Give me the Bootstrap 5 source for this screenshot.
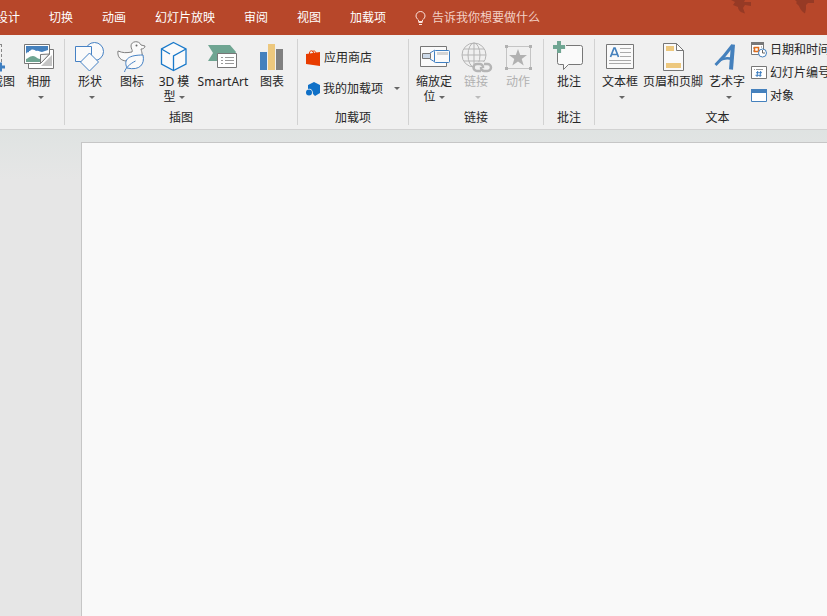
<!DOCTYPE html>
<html lang="zh-CN">
<head>
<meta charset="utf-8">
<meta name="viewport" content="width=device-width, initial-scale=1">
<title>演示文稿</title>
<link rel="stylesheet" href="https://cdn.jsdelivr.net/npm/bootstrap@5.3.0/dist/css/bootstrap.min.css">
<style>
body{font-family:"Noto Sans","Noto Sans CJK SC",sans-serif;font-size:12px;line-height:15px;color:#262626;background:#e6e6e6}
.title-tabs{background:#b7472a;height:35px;line-height:18px}
.tab-list{gap:29px;margin-left:-4px}
.tab-list a{color:#fff}
.tell-me{margin-left:29px;gap:6px;color:#fbe3dc}
.tell-me input{width:160px;height:18px;font-size:12px;line-height:18px;color:inherit;outline:0}
.tell-me input::placeholder{color:#f3d0c5;opacity:1}
.leaves{right:8px;top:0}
.ribbon{background:#f0f0f0;border-bottom:1px solid #d2d2d2;padding:4px 0}
.tool-group{height:86px;border-right:1px solid #d2d2d2;padding:0 4px}
.tool-group h2{font-size:12px;line-height:15px;margin:0;font-weight:400}
.g-images{width:65px}.g-art{width:233px}.g-addins{width:111px}.g-links{width:135px}.g-notes{width:51px}.g-text{width:246px}
.tool{border:0;background:none;padding:1px 0 0;width:42px;color:inherit;display:flex;flex-direction:column;align-items:center}
.tool svg{flex:none;margin-bottom:2px;overflow:visible}
.tool.w-clip{width:30px}.tool.w-smart{width:56px}.tool.w-page{width:64px}.tool.w-word{width:44px}
.tool:disabled{color:#b1b1b1}
.arrow{display:inline-block;border:3px solid transparent;border-top-color:#666;border-bottom:0;vertical-align:2px}
.tool .below{margin:7px 0 0 3px}
.tool:disabled .arrow{border-top-color:#bbb}
.row-tool{border:0;background:none;padding:0;color:inherit;gap:3px;height:23px}
.row-tool.tall{height:31px}
.g-addins .tools{padding:3px 4px 0}
.g-text .side{margin-top:-1px;padding-left:2px}
.workspace{background:linear-gradient(#dfe3e2,#e6e6e6 50px);padding:12px 0 0 81px}
.slide{background:#f9f9f9;border:1px solid #c6c6c6;border-width:1px 0 0 1px}
</style>
<script src="https://cdn.jsdelivr.net/npm/bootstrap@5.3.0/dist/js/bootstrap.bundle.min.js"></script>
</head>
<body class="d-flex flex-column min-vh-100 overflow-hidden">
<header class="title-tabs position-relative d-flex align-items-center overflow-hidden text-nowrap">
  <nav class="tab-list d-flex flex-shrink-0">
    <a class="text-decoration-none" href="#">设计</a>
    <a class="text-decoration-none" href="#">切换</a>
    <a class="text-decoration-none" href="#">动画</a>
    <a class="text-decoration-none" href="#">幻灯片放映</a>
    <a class="text-decoration-none" href="#">审阅</a>
    <a class="text-decoration-none" href="#">视图</a>
    <a class="text-decoration-none" href="#">加载项</a>
  </nav>
  <label class="tell-me d-flex align-items-center">
    <svg width="11" height="14" viewBox="0 0 11 14" fill="none" stroke="currentColor" aria-hidden="true"><path d="M3.500 10.500V9C2 7.800 1 6.500 1 5a4.500 4.500 0 0 1 9 0c0 1.500-1 2.800-2.500 4v1.500zM3.500 11.500h4M4 13.500h3"/></svg>
    <input class="border-0 bg-transparent p-0" type="text" placeholder="告诉我你想要做什么" aria-label="操作说明搜索">
  </label>
  <svg class="leaves position-absolute" width="88" height="14" viewBox="0 0 88 14" fill="#963a25" aria-hidden="true"><path d="M0 0h14l-1 2h7v4l-6-1-2 3 2 5.500c-4-1-7-3-7-6.500L2 5l2-3zM64 0h19v3h-6l-2 2v4l-1 4.500c-3-2-5-4-6-7.500l-3-3 1-1z"/></svg>
</header>

<main class="ribbon d-flex flex-nowrap overflow-hidden text-nowrap">
  <section class="tool-group g-images d-flex flex-column flex-shrink-0 overflow-hidden">
    <div class="d-flex justify-content-end align-items-start">
      <button class="tool w-clip flex-shrink-0" type="button">
        <svg width="30" height="32" fill="none"><path d="M0 4.500h13M13.500 4v18" stroke="#888" stroke-dasharray="3 2"/><path d="M8 27h9M12.500 22.500v9" stroke="#3f7fc1" stroke-width="3"/></svg>截图
      </button>
      <button class="tool flex-shrink-0" type="button">
        <svg width="30" height="32" fill="none"><path d="M4.500 23v5.500h25v-19h-4" fill="#fff" stroke="#777"/><path d="M17 26l11-11v11z" fill="#c4c4c4"/><path d="M.5 4.500h25V14l-9 9.500H.5z" fill="#fff" stroke="#777"/><path d="M2 6h22v8h-7v8H2z" fill="#4581bd"/><path d="M2 14c1-3 4-1 4-3 2-3 5-1 6 0 3-1 4 1 6 1l6-2v4h-7v8H2z" fill="#fff"/><path d="M2 19c2 0 3-3 7-3 3 0 4 3 7 3v3H2z" fill="#6fa592"/><path d="M25.500 14l-9 9.500V14.500z" fill="#f4f4f4" stroke="#777"/></svg>相册<span class="arrow below"></span>
      </button>
    </div>
  </section>

  <section class="tool-group g-art d-flex flex-column flex-shrink-0">
    <div class="d-flex flex-fill">
      <button class="tool" type="button">
        <svg width="30" height="32" fill="#fafafa" stroke="#4581c4"><circle cx="19.500" cy="11.500" r="9"/><path d="M.5 6.500h16v15H.5z"/><path d="M14.500 13l9 9-9 9-9-9z"/></svg>形状<span class="arrow below"></span>
      </button>
      <button class="tool" type="button">
        <svg width="30" height="32" fill="#fafafa"><path d="M10 21c-6 0-10-4-9-10 5 2 8 2 14 1 1-2-1-3-1-6 0-5 8-6 10-1l4 1c0 2-2 3-4 3 1 4 2 6 0 10" stroke="#808080"/><circle cx="19.500" cy="5.500" r="1" fill="#666"/><path d="M10 28c-4-9 2-13 16-13 2 9-3 16-16 13z" stroke="#4581c4"/><path d="M7.500 32c1-4 5-8 11-11" fill="none" stroke="#4581c4"/></svg>图标
      </button>
      <button class="tool" type="button">
        <svg width="30" height="32" fill="none" stroke="#1979ca" stroke-width="1.300"><path d="M14.500 2.500L27 9v15l-12.500 6.500L2.500 24V9z" fill="#fafafa"/><path d="M2.500 9l8.500 5M27 9l-12.500 7v14"/></svg><span>3D 模<br>型 <span class="arrow"></span></span>
      </button>
      <button class="tool w-smart" type="button">
        <svg width="30" height="32"><path d="M0 5h22l6 7-5 9H0l5-8z" fill="#6fa592"/><path d="M9.500 13.500h19v14h-19z" fill="#fff" stroke="#777"/><path d="M13 17.500h2M13 20.500h2M13 23.500h2M17 17.500h9M17 20.500h9M17 23.500h9" stroke="#999"/></svg>SmartArt
      </button>
      <button class="tool" type="button">
        <svg width="30" height="32"><path d="M3 12h7v18H3z" fill="#4581bd"/><path d="M11 4h7v26h-7z" fill="#edc87e"/><path d="M19 9h7v21h-7z" fill="#808080"/></svg>图表
      </button>
    </div>
    <h2 class="text-center">插图</h2>
  </section>

  <section class="tool-group g-addins d-flex flex-column flex-shrink-0">
    <div class="tools d-flex flex-column flex-fill">
      <button class="row-tool tall d-flex align-items-center" type="button">
        <svg width="15" height="16"><path d="M0 4l14-2v14L0 14z" fill="#e83c00"/><path d="M3.500 6V3c0-3 4-3 4 0v2M6 2c2-2 4-1 4 2" fill="none" stroke="#e83c00"/></svg>应用商店
      </button>
      <button class="row-tool tall d-flex align-items-center" type="button">
        <svg width="15" height="16"><path d="M2 4l6-3 6 3v8l-5 3-2-2c0-4-2-6-5-5z" fill="#0f70c7"/><circle cx="3" cy="11.500" r="3" fill="#0f70c7"/></svg>我的加载项<span class="arrow ms-2"></span>
      </button>
    </div>
    <h2 class="text-center">加载项</h2>
  </section>

  <section class="tool-group g-links d-flex flex-column flex-shrink-0">
    <div class="d-flex flex-fill">
      <button class="tool" type="button">
        <svg width="30" height="32" fill="#fafafa"><path d="M1.500 6.500h26v20h-26z" stroke="#777"/><path d="M11 13l5-3M11 19l5 3" stroke="#4581c4"/><path d="M3.500 13.500h8v5h-8z" fill="#ccd9e8" stroke="#777"/><rect x="15.500" y="10.500" width="15" height="12" rx="1" stroke="#3f7fc1"/><path d="M18 12h11v3H18z" fill="#d4d4d4"/></svg><span>缩放定<br>位 <span class="arrow"></span></span>
      </button>
      <button class="tool" type="button" disabled>
        <svg width="30" height="32" fill="none" stroke="#b5b5b5"><circle cx="13" cy="15" r="12"/><ellipse cx="13" cy="15" rx="6" ry="12"/><path d="M13 3v24M1 15h24M3 9h20M3 21h20"/><path d="M14 22h14v10H14z" fill="#f0f0f0" stroke="none"/><path d="M20 31h-4a3.500 3.500 0 0 1 0-7h3a3.500 3.500 0 0 1 3 4M20 27a3.500 3.500 0 0 0 3.500 4h3a3.500 3.500 0 0 0 0-7H23" stroke-width="2.500"/></svg>链接<span class="arrow below"></span>
      </button>
      <button class="tool" type="button" disabled>
        <svg width="30" height="32" fill="#b1b1b1"><path d="M3.500 6.500h24v22h-24z" fill="none" stroke="#c4c4c4"/><path d="M2 5h3v3H2zM26 5h3v3h-3zM2 27h3v3H2zM26 27h3v3h-3zM15 9l2.200 6H24l-5.300 4 2 6.500-5.700-4-5.700 4 2-6.500L6 15h6.800z"/></svg>动作
      </button>
    </div>
    <h2 class="text-center">链接</h2>
  </section>

  <section class="tool-group g-notes d-flex flex-column flex-shrink-0">
    <div class="d-flex flex-fill">
      <button class="tool" type="button">
        <svg width="30" height="32"><path d="M3.500 5.500h23q2 0 2 2v15q0 2-2 2h-12l-5 5v-5h-4q-2 0-2-2v-15z" fill="#fafafa" stroke="#777"/><path d="M3 0h5v4h4v5H8v4H3V9H-1V4h4z" fill="#f0f0f0"/><path d="M3 1h4v4h4v4H7v4H3V9H-1V5h4z" fill="#6fa592"/></svg>批注
      </button>
    </div>
    <h2 class="text-center">批注</h2>
  </section>

  <section class="tool-group g-text d-flex flex-column flex-shrink-0">
    <div class="d-flex flex-fill">
      <button class="tool flex-shrink-0" type="button">
        <svg width="30" height="32"><path d="M1.500 4.500h27v24h-27z" fill="#fafafa" stroke="#777"/><path d="M5.500 17l3.500-9h1l3.500 9M7 14.500h5" fill="none" stroke="#4581bd" stroke-width="1.700"/><path d="M15 8.500h11M15 12.500h11M15 16.500h11M4 20.500h22M4 23.500h22" stroke="#aaa"/></svg>文本框<span class="arrow below"></span>
      </button>
      <button class="tool w-page flex-shrink-0" type="button">
        <svg width="30" height="32"><path d="M5.500 3.500h13l7 7v20h-20z" fill="#fafafa" stroke="#777"/><path d="M18.500 3.500v7h7" fill="none" stroke="#777"/><path d="M8 6h8v5H8zM8 23h15v5H8z" fill="#edc87e"/></svg>页眉和页脚
      </button>
      <button class="tool w-word flex-shrink-0" type="button">
        <svg width="30" height="32" fill="none" stroke="#4581bd"><path d="M3.500 25Q12 17 20 6" stroke-width="3"/><path d="M21 4.500q-1 12-2 25" stroke-width="4"/><path d="M8 20q6-3 12-1" stroke-width="2.500"/></svg>艺术字<span class="arrow below"></span>
      </button>
      <div class="side d-flex flex-column flex-shrink-0">
        <button class="row-tool d-flex align-items-center" type="button">
          <svg width="16" height="16"><path d="M.5 .5h12v12H.5z" fill="#fff" stroke="#777"/><path d="M0 0h13v3H0z" fill="#777"/><path d="M2 6h1M2 9h1M10 5h1" stroke="#777"/><path d="M3.500 5.500h4v4h-4z" fill="none" stroke="#e06c1b" stroke-width="1.500"/><circle cx="11.500" cy="11" r="4" fill="#fff" stroke="#4581bd"/><path d="M11.500 8v3H14" fill="none" stroke="#666"/></svg>日期和时间
        </button>
        <button class="row-tool d-flex align-items-center" type="button">
          <svg width="16" height="16"><path d="M.5 1.500h15v12H.5z" fill="#fff" stroke="#777"/><path d="M3 4.500h1M5 4.500h7" stroke="#999"/><path d="M6.700 6L6 12M9.700 6L9 12M5 7.700h6M4.500 10.300h6" stroke="#3f7fc1"/></svg>幻灯片编号
        </button>
        <button class="row-tool d-flex align-items-center" type="button">
          <svg width="16" height="16"><path d="M.5 1.500h15v12H.5z" fill="#fff" stroke="#4581bd"/><path d="M0 1h16v4H0z" fill="#4581bd"/></svg>对象
        </button>
      </div>
    </div>
    <h2 class="text-center">文本</h2>
  </section>
</main>

<div class="workspace d-flex flex-column flex-fill">
  <div class="slide flex-fill"></div>
</div>
</body>
</html>
